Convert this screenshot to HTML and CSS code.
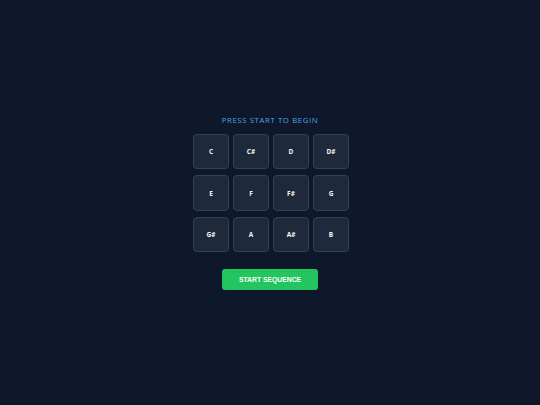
FILE: index.html
```html
<!DOCTYPE html>
<html>
<head>
<meta charset="utf-8">
<link rel="stylesheet" href="styles.css">
</head>
<body>
<div class="app">
  <div class="status">PRESS START TO BEGIN</div>
  <div class="keys">
    <div class="key">C</div>
    <div class="key">C#</div>
    <div class="key">D</div>
    <div class="key">D#</div>
    <div class="key">E</div>
    <div class="key">F</div>
    <div class="key">F#</div>
    <div class="key">G</div>
    <div class="key">G#</div>
    <div class="key">A</div>
    <div class="key">A#</div>
    <div class="key">B</div>
  </div>
  <button class="start">START SEQUENCE</button>
</div>
</body>
</html>
```
FILE: styles.css
```css
html, body {
  margin: 0;
  padding: 0;
  width: 100%;
  height: 100%;
  background: #0f172a;
}
.app {
  height: 405px;
  display: flex;
  flex-direction: column;
  align-items: center;
  justify-content: center;
}
.status {
  font-family: "Open Sans", sans-serif;
  font-size: 7.8px;
  line-height: 10px;
  letter-spacing: 0.6px;
  color: #4aa3e2;
  margin-bottom: 9px;
}
.keys {
  display: grid;
  grid-template-columns: repeat(4, 35.5px);
  grid-auto-rows: 35.5px;
  column-gap: 4.5px;
  row-gap: 6px;
  margin-left: 2px;
}
.key {
  box-sizing: border-box;
  background: #1e293b;
  border: 1px solid #334155;
  border-radius: 4px;
  display: flex;
  align-items: center;
  justify-content: center;
  font-family: "Open Sans", sans-serif;
  font-weight: 700;
  font-size: 6.5px;
  color: #f1f5f9;
}
.start {
  margin-top: 17px;
  width: 96px;
  height: 21px;
  border: none;
  border-radius: 3px;
  background: #22c55e;
  color: #ffffff;
  font-family: "Liberation Sans", Arial, sans-serif;
  font-weight: 700;
  font-size: 6.8px;
  padding: 0;
}
```
